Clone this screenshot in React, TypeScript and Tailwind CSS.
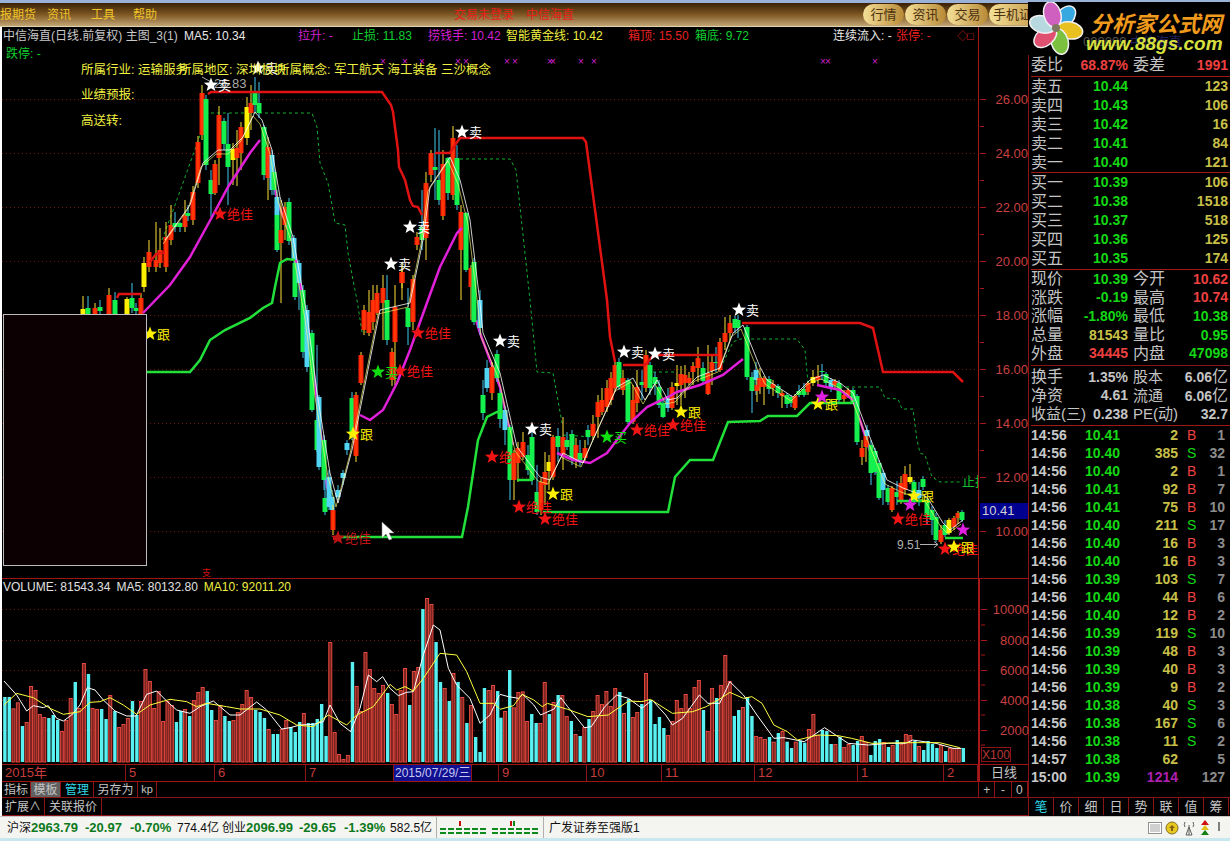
import React from 'react'

type C = [number, number, number, string, number?, number?]

// candles in page pixels: x, body top, body bottom, colour, wick top, wick bottom
const candles: C[] = [
  [83,309,320,'y',296],[88,308,320,'g',296],[95,308,320,'r'],[100,307,311,'g',300],[109,295,320,'r',288],[115,300,320,'g',292],[127,299,320,'y',297],[132,298,308,'g',283],[136,308,311,'g'],[141,298,320,'r',293],
  [144,263,287,'y',257],[149,252,267,'r',240],[156,260,267,'r',222],[160,250,263,'r',228],[166,237,267,'r',222],[171,225,240,'r',205],[175,223,227,'g',212],[180,223,227,'g',222],[185,215,227,'r',200],[188,213,216,'g',205],[193,192,220,'r',186],
  [198,142,183,'r',136],[202,93,135,'r',85],[206,99,165,'g',95,170],[211,180,194,'g',170,217],[215,164,193,'r',160,195],[219,115,158,'r',106,185],[224,121,144,'g',118,150],[228,144,167,'g',113,205],[233,149,160,'y',143,185],[237,148,158,'r',130,186],[241,127,153,'r',122,170],
  [247,107,138,'y',97,145],[251,103,113,'r',85,130],[255,92,105,'g',77,112],[259,103,113,'g',82,118],[264,127,175,'g',125,180],[268,147,178,'r',137,200],[272,155,190,'c',150,195],[274,172,190,'g',170,195],[277,197,215,'c',190,230],[277,215,250,'g',212,252],[281,230,243,'r',200,303],[285,207,225,'r',202,240],[289,202,241,'g',198,245],[294,238,260,'c',235,265],[295,263,297,'g',262,300],[299,263,283,'c',260,310],
  [303,290,352,'g',285,358],[307,310,367,'c',305,372],[312,333,410,'g',330,412],[317,420,450,'g',345,452],[319,397,467,'c',395,470],[324,440,480,'g',435,490],[325,498,512,'g',478,515],[329,477,507,'c',470,510],[332,497,510,'c',490,512],[333,510,530,'r',505,535],
  [338,490,497,'c',485,500],[343,473,478,'c',470,485],[347,443,450,'c',440,455],[352,398,437,'g',392,440],[356,395,456,'r',392,462],
  [361,355,383,'r',352,385],[364,310,330,'r',305,335],[369,312,333,'r',290,336],[373,300,322,'r',285,330],[377,293,313,'r',285,315],[383,288,303,'r',275,340],[387,300,340,'g',275,345],[392,352,380,'r',348,386],[395,307,342,'r',285,385],[402,272,283,'r',262,300],[402,272,283,'r'],[408,308,327,'g',288,345],[413,279,322,'r',275,330],[417,237,245,'r',232,250],[422,227,240,'g',190,250],[426,183,238,'r',172,260],
  [431,153,175,'r',150,182],[435,167,170,'g',128,200],[439,180,200,'g',130,205],[443,164,216,'r',150,220],[448,158,193,'g',157,200],[453,138,195,'r',126,200],[457,158,205,'g',145,210],[461,212,250,'r',205,300],[466,213,270,'g',212,272],[471,268,287,'r',265,320],[474,262,322,'g',258,325],[480,300,328,'c',290,335],
  [483,395,413,'g',380,420],[487,368,388,'c',360,392],[492,367,393,'r',362,400],[497,354,378,'g',350,382],[500,393,419,'g',390,428],[505,410,430,'c',406,445],[510,427,480,'g',425,500],[514,453,480,'r',450,500],[518,448,463,'r',442,482],[523,442,457,'r',432,460],[528,455,470,'g',445,475],[532,437,480,'g',432,485],[537,492,512,'g',465,515],[541,482,510,'r',478,515],[545,472,485,'r',452,505],[549,462,471,'y',455,490],[553,437,477,'r',435,480],
  [558,436,447,'g',428,462],[563,437,455,'r',417,470],[567,440,447,'g',432,450],[572,434,460,'g',430,465],[576,445,460,'r',438,468],[580,453,462,'g',440,466],[585,448,458,'r',440,462],[588,430,437,'g',425,445],[593,424,436,'r',415,440],[598,402,417,'r',395,438],[602,400,412,'r',388,415],[607,388,407,'r',380,412],[611,378,400,'r',372,405],[615,365,388,'r',360,392],[619,362,387,'g',358,390],[623,378,390,'r',370,395],[628,380,422,'g',378,424],[633,400,422,'r',385,424],[637,387,403,'r',370,412],[642,382,385,'g',370,400],[646,355,388,'r',350,392],[650,365,388,'g',362,395],
  [655,377,384,'g',372,395],[659,387,405,'g',380,408],[663,403,417,'g',398,418],[668,397,408,'c',388,412],[672,387,408,'r',382,410],[677,383,386,'y',365,405],[681,374,385,'r',366,405],[685,375,383,'r',365,398],[689,378,383,'r',372,385],[693,366,372,'r',362,385],[698,358,368,'r',347,382],[703,368,381,'g',362,384],[708,373,394,'r',345,395],[712,362,371,'r',355,385],[716,362,363,'g',347,372],[720,342,370,'r',338,372],[725,333,342,'r',317,350],[730,323,333,'r',315,340],[735,319,328,'g',316,333],[738,320,328,'g',315,338],
  [747,327,377,'g',325,380],[752,377,391,'g',372,413],[756,370,380,'c',362,395],[757,385,391,'r',378,402],[760,378,387,'r',368,394],[764,378,387,'r',376,405],[769,379,389,'g',376,394],[773,384,388,'r',380,396],[778,386,393,'g',384,398],[782,393,396,'r',390,408],[787,395,404,'g',393,408],[791,397,403,'g',395,407],[795,396,408,'r',394,410],[799,391,395,'g',385,397],[804,389,395,'g',383,397],[808,383,392,'r',381,395],[813,377,383,'y',370,386],[818,376,380,'r',365,384],[822,371,372,'g',364,380],[826,374,383,'g',372,386],[831,380,387,'c',378,392],[835,381,385,'r',379,388],[839,383,400,'g',380,402],[844,395,399,'r',390,402],[848,390,395,'r',388,398],[853,390,402,'g',388,404],
  [857,396,442,'g',394,445],[862,448,457,'r',440,465],[866,436,447,'r',430,462],[867,430,436,'c',425,440],[871,445,473,'g',440,485],[875,451,472,'g',448,475],[879,463,498,'g',460,500],[883,473,490,'c',470,505],[888,488,502,'g',485,505],[892,488,510,'r',486,512],[897,492,497,'g',481,505],[901,483,502,'r',476,504],[905,474,490,'r',466,495],[910,477,482,'y',464,484],[914,482,502,'g',480,504],[919,490,498,'c',482,506],[923,479,487,'g',476,490],[927,500,517,'g',498,525],[932,510,520,'g',506,535],[936,517,540,'g',513,542],[941,530,542,'r',525,544],[945,525,535,'g',520,537],[949,520,533,'y',518,535],[954,518,527,'r',516,530],[958,513,518,'r',511,524],[962,512,520,'g',510,522],
]

const fill: Record<string, string> = { r: '#ff2408', g: '#14f04e', c: '#52d4f4', y: '#fff000' }

// volume bars read from the picture, top in 3x zoom px, minus means cyan
const vol1 = [-366,-366,400,382,-453,441,333,345,417,426,-429,-420,-435,468,435,369,-321,399,264,-297,399,402,-402,-432,360,-408,456,447,429,-378,-420,378,282,318,399,348,438,378,390,-441,-408,402,-423,375,351,336,-348,-405,435,390,-423,-438,435,411,387,345,366,-405,-411,-429,462,-477,-477,462,435,-456,-471,-441,414,-444,-444,-432,-387,-483,201,471,537,552,540,-261,333,408,231,282,339,354,330,-354,387,417,345,279,-390,288,276,-102,69,87,-201,-321,339,-378,294,-321,366,-444,390,-486,-531,-339,345,330,-348]
const vol2 = [-428,408,-285,397,351,349,438,-417,-444,444,321,-417,381,-360,360,423,-438,477,-483,456,-432,408,360,387,348,393,339,-351,414,-372,426,411,-387,294,-375,-447,-426,-459,480,438,375,399,357,399,336,315,-405,468,339,-369,330,240,318,-423,-405,396,-366,-423,483,486,492,-486,500,-474,468,-500,-519,500,-497,-503,462,417,480,-465,-468,-507,507,-486,516,507,-510,-498,483,501,-540,-498,-492,501,-516,510,-495,507,477,480,-498,513,-525,-498,-507,-519,510,-528,519,519,519,-519]

type P = [number, number]
const z9 = (a: number[]) => { const r: string[] = []; for (let i = 0; i < a.length; i += 2) r.push(`${a[i] / 3},${575 + a[i + 1] / 3}`); return r.join(' ') }
const z10 = (a: number[]) => { const r: string[] = []; for (let i = 0; i < a.length; i += 2) r.push(`${500 + a[i] / 2.958},${575 + a[i + 1] / 3}`); return r.join(' ') }

const whiteV1 = [12,318,50,360,80,408,100,392,130,398,145,392,170,430,190,438,215,420,240,390,262,338,285,345,310,375,345,408,380,423,408,423,440,358,470,348,500,378,530,405,570,415,600,395,640,378,690,420,720,420,770,381,800,405,845,462,870,458,900,450,940,448,970,440,990,390,1020,445,1052,470,1080,400,1105,300,1130,320,1148,305,1170,340,1195,362,1220,352,1240,350,1270,240,1300,150,1320,165,1345,280,1370,330,1410,370,1440,445,1470,420,1498,360]
const yellowV1 = [12,390,50,355,100,368,150,400,190,418,240,410,270,382,300,380,330,368,370,390,410,418,450,390,510,373,560,380,590,395,620,385,680,395,720,402,780,402,840,420,890,450,940,455,985,420,1040,450,1070,420,1120,395,1170,328,1190,345,1215,335,1240,348,1270,310,1320,235,1370,240,1400,290,1440,385,1480,385,1498,400]
const whiteV2 = [0,358,25,365,55,370,67,358,100,390,120,420,160,402,180,368,200,395,250,458,270,455,310,395,345,360,380,370,420,400,450,375,490,420,510,450,540,430,590,360,615,385,650,385,680,320,720,360,760,420,810,490,840,488,900,500,960,458,1030,505,1090,510,1150,505,1200,505,1220,495,1290,505,1340,520,1365,520]
const yellowV2 = [0,403,40,392,65,358,100,375,125,395,140,385,200,403,260,425,320,420,380,378,420,380,445,373,510,415,570,410,610,395,650,372,680,352,720,370,745,365,775,385,810,450,850,470,880,495,940,480,1000,482,1040,490,1100,505,1200,503,1300,503,1360,518]

const line = (a: P[]) => a.map(p => p.join(',')).join(' ')

const redLines: P[][] = [
  [[117,298],[119,294],[141,294]],
  [[150,262],[156,254],[165,252]],
  [[208,94],[211,92],[382,92],[391,105],[393,112],[398,150],[399,167],[405,180],[410,200],[413,206],[418,207],[422,215]],
  [[435,153],[450,153],[455,145],[460,138],[583,138],[586,142],[607,300],[610,337],[615,362]],
  [[623,365],[645,365],[652,357],[657,355],[718,355]],
  [[742,323],[860,323],[873,328],[883,372],[953,372],[963,382]],
]
// the falling legs run behind the candles, the rising ones lie on top
const magentaUnder: P[][] = [
  [[268,157],[278,203],[293,243],[310,340],[327,487],[333,505]],
  [[476,320],[480,333],[500,387],[513,445]],
  [[853,400],[860,420],[877,473]],
]
const magentaLines: P[][] = [
  [[143,313],[170,285],[190,257],[212,217],[228,187],[250,153],[260,140]],
  [[360,415],[370,420],[383,410],[397,383],[410,350],[428,300],[440,267],[457,233],[462,228]],
  [[557,453],[573,460],[590,463],[607,453],[630,423],[647,407],[668,397],[677,392],[700,385],[723,375],[743,359]],
  [[817,385],[840,390],[853,400]],
]
const greenLines: P[][] = [
  [[147,372],[190,372],[200,360],[210,340],[225,330],[250,318],[263,308],[272,303],[275,287],[280,263],[287,259],[295,260]],
  [[337,537],[462,537],[468,507],[478,440],[487,417],[497,412],[503,412]],
  [[517,480],[533,480]],
  [[543,512],[668,512],[675,477],[690,460],[713,460],[728,422],[760,421],[768,416],[797,416],[810,403],[853,403]],
  [[897,501],[930,501]],
  [[945,538],[963,538]],
]
const dashed: P[][] = [
  [[162,240],[175,205],[208,113],[312,113],[317,127],[320,163],[328,183],[332,205],[335,223],[345,225],[348,253],[353,280],[357,300],[362,332],[367,332]],
  [[460,159],[510,159],[516,170],[530,300],[537,372],[553,373],[562,423]],
  [[563,435],[593,437]],
  [[653,372],[677,372]],
  [[723,363],[733,342],[740,339],[797,339],[805,350],[808,383],[812,390]],
  [[840,387],[880,387],[885,398],[898,399],[902,409],[913,409],[917,440],[920,453],[925,455],[932,477],[940,482],[962,482]],
]
const whiteLine: P[] = [[165,240],[190,205],[203,163],[218,150],[230,150],[243,137],[255,112],[262,120],[272,150],[280,197],[293,237],[307,315],[317,393],[330,473],[338,503],[352,450],[360,410],[380,310],[410,303],[423,240],[430,187],[450,157],[460,180],[470,220],[480,303],[483,333],[500,373],[517,447],[540,477],[550,480],[563,453],[583,463],[593,440],[617,387],[633,378],[645,400],[657,380],[668,400],[677,398],[697,377],[720,368],[733,333],[743,325],[760,367],[767,380],[793,397],[810,380],[823,375],[840,383],[853,393],[867,430],[887,480],[903,488],[927,497],[943,523],[950,530],[963,520]]
const yellowLine: P[] = whiteLine.map(([x, y]) => [x - 2, y + 4] as P)

type M = [number, number, string, string?]
const marks: M[] = [
  [211,85,'w','卖'],[258,68,'w','卖'],[410,227,'w','卖'],[391,264,'w','卖'],[462,132,'w','卖'],[500,341,'w','卖'],[532,429,'w','卖'],[624,352,'w','卖'],[655,354,'w','卖'],[739,310,'w','卖'],
  [220,214,'r','绝佳'],[418,333,'r','绝佳'],[400,371,'r','绝佳'],[492,457,'r','绝'],[519,507,'r','绝佳'],[545,519,'r','绝佳'],[338,538,'d','绝佳'],[637,430,'r','绝佳'],[673,425,'r','绝佳'],[898,519,'r','绝佳'],[945,549,'r','绝佳'],
  [378,372,'g','买'],[607,437,'g','买'],
  [150,334,'y','跟'],[353,434,'y','跟'],[553,494,'y','跟'],[681,412,'y','跟'],[818,404,'y','跟'],[914,496,'y','跟'],[954,547,'y','跟'],
  [822,397,'m'],[910,505,'m'],[963,530,'m'],
]
const markColor: Record<string, string> = { w: '#ffffff', r: '#f01414', d: '#c01414', g: '#10e010', y: '#fff000', m: '#e020e0' }

function star(cx: number, cy: number, r: number) {
  const p: string[] = []
  for (let i = 0; i < 10; i++) {
    const a = -Math.PI / 2 + (i * Math.PI) / 5
    const d = i % 2 ? r * 0.42 : r
    p.push(`${(cx + d * Math.cos(a)).toFixed(1)},${(cy + d * Math.sin(a)).toFixed(1)}`)
  }
  return p.join(' ')
}

const priceLevels = [26, 24, 22, 20, 18, 16, 14, 12, 10]
const py = (p: number) => 99 + (26 - p) * 27
const crosses = [383,405,422,458,466,507,515,550,553,581,594,823,828,875]

function MainChart() {
  return (
    <svg width="976" height="551" className="block">
      <g transform="translate(-2 -27)">
        {priceLevels.map(p => <line key={p} x1="2" x2="978" y1={py(p) + 0.5} y2={py(p) + 0.5} stroke="#701414" strokeDasharray="1 3" />)}
        {crosses.map(x => <text key={x} x={x} y="65" fill="#d020d0" fontSize="10" textAnchor="middle">×</text>)}
        {dashed.map((a, i) => <polyline key={i} points={line(a)} fill="none" stroke="#12b030" strokeDasharray="3 3" />)}
        {magentaUnder.map((a, i) => <polyline key={i} points={line(a)} fill="none" stroke="#e020d8" strokeWidth="2.5" />)}
        {candles.map(([x, t, b, c, wt, wb], i) => (
          <g key={i}>
            <line x1={x} x2={x} y1={wt ?? t - 5} y2={wb ?? b + 5} stroke={c === 'r' || c === 'y' ? '#ffe23a' : '#44c8f0'} />
            <rect x={x - 2.5} y={t} width="5" height={b - t} fill={fill[c]} />
            {c === 'r' && <rect x={x - 0.5} y={t} width="1" height={b - t} fill="#ff4a00" />}
          </g>
        ))}
        {magentaLines.map((a, i) => <polyline key={i} points={line(a)} fill="none" stroke="#e020d8" strokeWidth="2.5" />)}
        <polyline points={line(yellowLine)} fill="none" stroke="#ffff70" strokeWidth="0.8" strokeOpacity="0.8" />
        <polyline points={line(whiteLine)} fill="none" stroke="#ffffff" strokeWidth="0.8" />
        {redLines.map((a, i) => <polyline key={i} points={line(a)} fill="none" stroke="#e01212" strokeWidth="2.5" />)}
        {greenLines.map((a, i) => <polyline key={i} points={line(a)} fill="none" stroke="#22e03a" strokeWidth="2.5" />)}
        <rect x="333" y="536" width="4" height="4" fill="#e01010" />
        <path d="M202 77l11 6" stroke="#a8a8a8" />
        <text x="214" y="88" fill="#a8a8a8" fontSize="13">26.83</text>
        {marks.map(([x, y, c, t], i) => (
          <g key={i}>
            <polygon points={star(x, y, 7.5)} fill={markColor[c]} />
            {t && <text x={x + 7} y={y + 5} fill={markColor[c]} fontSize="13">{t}</text>}
          </g>
        ))}
        <text x="897" y="549" fill="#b0b0b0" fontSize="12">9.51</text>
        <path d="M920 544.5H938M934 541.5l4 3-4 3" fill="none" stroke="#b0b0b0" />
        <text x="962" y="486" fill="#10c030" fontSize="13">止损</text>
        <path d="M382 522v16l4-4 3 6 3-1-3-6h5z" fill="#ffffff" stroke="#888888" strokeWidth="0.5" />
        <text x="202" y="576" fill="#d01010" fontSize="9">支</text>
      </g>
    </svg>
  )
}

function PriceAxis() {
  const minor = [25, 23, 21, 19, 17, 15, 13, 11]
  return (
    <svg width="50" height="551" className="block">
      <g transform="translate(-978 -27)">
        {priceLevels.map(p => (
          <g key={p}>
            <line x1="979" x2="985" y1={py(p) + 0.5} y2={py(p) + 0.5} stroke="#a81818" />
            <text x="1027" y={py(p) + 5} textAnchor="end" fill="#c84040" fontSize="13">{p.toFixed(2)}</text>
          </g>
        ))}
        {minor.map(p => <line key={p} x1="979" x2="983" y1={py(p) + 0.5} y2={py(p) + 0.5} stroke="#a81818" />)}
        <rect x="979" y="503" width="49" height="16" fill="#000090" />
        <text x="981" y="515" fill="#d0d0d0" fontSize="13">10.41</text>
      </g>
    </svg>
  )
}

function VolumeChart() {
  const bar = (x: number, top: number, key: string) => {
    const t = Math.abs(top)
    const y = 575 + t / 3
    if (top < 0) return <rect key={key} x={x - 1.5} y={y} width="3.4" height={762 - y} fill="#58f0f0" />
    return <rect key={key} x={x - 1.5} y={y + 0.5} width="3" height={761.5 - y} fill="#7c2420" stroke="#e4483e" />
  }
  return (
    <svg width="976" height="185" className="block">
      <g transform="translate(-2 -579)">
        {[609, 640, 670, 700, 730].map(y => <line key={y} x1="2" x2="978" y1={y + 0.5} y2={y + 0.5} stroke="#701414" strokeDasharray="1 3" />)}
        {vol1.map((v, i) => bar(4.67 + 4.4 * i, v, `a${i}`))}
        {vol2.map((v, i) => bar(500.7 + 4.404 * i, v, `b${i}`))}
        <polyline points={z9(whiteV1)} fill="none" stroke="#ffffff" />
        <polyline points={z10(whiteV2)} fill="none" stroke="#ffffff" />
        <polyline points={z9(yellowV1)} fill="none" stroke="#ffff40" />
        <polyline points={z10(yellowV2)} fill="none" stroke="#ffff40" />
      </g>
    </svg>
  )
}

function VolumeAxis() {
  const labels: [string, number][] = [['10000', 609], ['8000', 640], ['6000', 670], ['4000', 700], ['2000', 730]]
  return (
    <svg width="50" height="185" className="block">
      <g transform="translate(-978 -579)">
        {labels.map(([t, y]) => (
          <g key={t}>
            <line x1="979" x2="985" y1={y + 0.5} y2={y + 0.5} stroke="#a81818" />
            <text x="1027" y={y + 5} textAnchor="end" fill="#c84040" fontSize="13">{t}</text>
          </g>
        ))}
        {[625, 655, 685, 715, 745].map(y => <line key={y} x1="979" x2="983" y1={y} y2={y} stroke="#a81818" />)}
      </g>
    </svg>
  )
}

const book: [string, string, string][] = [
  ['卖五', '10.44', '123'], ['卖四', '10.43', '106'], ['卖三', '10.42', '16'], ['卖二', '10.41', '84'], ['卖一', '10.40', '121'],
]
const book2: [string, string, string][] = [
  ['买一', '10.39', '106'], ['买二', '10.38', '1518'], ['买三', '10.37', '518'], ['买四', '10.36', '125'], ['买五', '10.35', '174'],
]
const stats: [string, string, string, string, string, string][] = [
  ['现价', '10.39', 'text-[#14d814]', '今开', '10.62', 'text-[#ee4040]'],
  ['涨跌', '-0.19', 'text-[#14d814]', '最高', '10.74', 'text-[#ee4040]'],
  ['涨幅', '-1.80%', 'text-[#14d814]', '最低', '10.38', 'text-[#14d814]'],
  ['总量', '81543', 'text-[#c8c048]', '量比', '0.95', 'text-[#14d814]'],
  ['外盘', '34445', 'text-[#ee4040]', '内盘', '47098', 'text-[#14d814]'],
]
const stats2: [string, string, string, string][] = [
  ['换手', '1.35%', '股本', '6.06亿'], ['净资', '4.61', '流通', '6.06亿'], ['收益(三)', '0.238', 'PE(动)', '32.7'],
]
const trades: [string, string, string, string, string][] = [
  ['14:56','10.41','2','B','1'],['14:56','10.40','385','S','32'],['14:56','10.40','2','B','1'],['14:56','10.41','92','B','7'],['14:56','10.41','75','B','10'],
  ['14:56','10.40','211','S','17'],['14:56','10.40','16','B','3'],['14:56','10.40','16','B','3'],['14:56','10.39','103','S','7'],['14:56','10.40','44','B','6'],
  ['14:56','10.40','12','B','2'],['14:56','10.39','119','S','10'],['14:56','10.39','48','B','3'],['14:56','10.39','40','B','3'],['14:56','10.39','9','B','2'],
  ['14:56','10.38','40','S','3'],['14:56','10.38','167','S','6'],['14:56','10.38','11','S','2'],['14:57','10.38','62','','5'],['15:00','10.39','1214','','127'],
]

function BookRows({ rows, h }: { rows: [string, string, string][]; h: string }) {
  return (
    <div className={`flex flex-col border-b border-[#a01818] box-content ${h}`}>
      {rows.map(r => (
        <div key={r[0]} className="flex items-center h-[19px] shrink-0">
          <span className="w-[36px]">{r[0]}</span>
          <span className="w-[61px] text-right text-[14px] font-bold text-[#14d814]">{r[1]}</span>
          <span className="w-[100px] text-right text-[14px] font-bold text-[#c8c048]">{r[2]}</span>
        </div>
      ))}
    </div>
  )
}

function RightPanel() {
  return (
    <div className="w-[202px] flex flex-col bg-black border-l border-[#8c1414] pl-[2px] text-[16px] text-[#c4c4c4]">
      <div className="h-[26px] shrink-0" />
      <div className="h-[22px] mt-[1px] flex items-center border-b border-[#a01818] box-content shrink-0">
        <span className="w-[36px]">委比</span>
        <span className="w-[61px] text-right text-[14px] font-bold text-[#ee4040]">68.87%</span>
        <span className="w-[36px] ml-[4px] pl-[1px]">委差</span>
        <span className="w-[60px] text-right text-[14px] font-bold text-[#ee4040]">1991</span>
      </div>
      <BookRows rows={book} h="h-[95px]" />
      <BookRows rows={book2} h="h-[96px]" />
      <div className="flex flex-col h-[96px] border-b border-[#8c1414] shrink-0">
        {stats.map(s => (
          <div key={s[0]} className="flex items-center h-[18.6px]">
            <span className="w-[36px]">{s[0]}</span>
            <span className={`w-[61px] text-right text-[14px] font-bold ${s[2]}`}>{s[1]}</span>
            <span className="w-[36px] ml-[4px] pl-[1px]">{s[3]}</span>
            <span className={`w-[60px] text-right text-[14px] font-bold ${s[5]}`}>{s[4]}</span>
          </div>
        ))}
      </div>
      <div className="flex flex-col h-[60px] pt-[2px] border-b border-[#a01818] shrink-0">
        {stats2.map(s => (
          <div key={s[0]} className="flex items-center h-[18.6px]">
            <span className={s[0].length > 2 ? 'w-[60px] text-[15px] whitespace-nowrap' : 'w-[36px]'}>{s[0]}</span>
            <span className={`text-right text-[14px] font-bold text-[#c4c4c4] ${s[0].length > 2 ? 'w-[37px]' : 'w-[61px]'}`}>{s[1]}</span>
            <span className="w-[44px] ml-[4px] pl-[1px] text-[15px] whitespace-nowrap">{s[2]}</span>
            <span className="w-[52px] text-right text-[14px] font-bold text-[#c4c4c4] whitespace-nowrap">{s[3].replace('亿', '')}{s[3].includes('亿') && <span className="text-[16px] font-normal">亿</span>}</span>
          </div>
        ))}
      </div>
      <div className="flex flex-col h-[371px] text-[14px] font-bold shrink-0">
        {trades.map((t, i) => (
          <div key={i} className="flex items-center h-[18px] shrink-0">
            <span className="w-[36px] text-[#c8c8c8]">{t[0]}</span>
            <span className="w-[53px] text-right text-[#14d814]">{t[1]}</span>
            <span className={`w-[58px] text-right ${t[2] === '1214' ? 'text-[#b020b0]' : 'text-[#c8c048]'}`}>{t[2]}</span>
            <span className={`w-[18px] pl-[9px] font-normal ${t[3] === 'B' ? 'text-[#ee4040]' : 'text-[#14d814]'}`}>{t[3]}</span>
            <span className="w-[29px] text-right text-[#8c8c8c]">{t[4]}</span>
          </div>
        ))}
      </div>
      <div className="flex h-[18px] -ml-[2px] border-t border-[#8c1414] text-[13px] shrink-0">
        {['笔', '价', '细', '日', '势', '联', '值', '筹'].map((t, i) => (
          <div key={t} className={`w-[25px] flex items-center justify-center border-r border-[#8c1414] ${i === 0 ? 'text-[#30d8e8]' : ''}`}>{t}</div>
        ))}
      </div>
    </div>
  )
}

function Logo() {
  const petals = [
    { a: -50, c: '#38a8e0' }, { a: 10, c: '#e8c020' }, { a: 75, c: '#7cc040' }, { a: 140, c: '#e05070' }, { a: 195, c: '#b8d8e0' }, { a: -105, c: '#d060c0' },
  ]
  return (
    <div className="absolute right-0 top-[2px] w-[202px] h-[53px] bg-black overflow-hidden">
      <svg width="60" height="53" className="absolute left-0 top-0">
        <g transform="translate(28 26)">
          {petals.map(p => (
            <ellipse key={p.a} cx="14" cy="0" rx="13" ry="8.5" fill={p.c} stroke="#f0f0f0" strokeWidth="1.5" transform={`rotate(${p.a})`} />
          ))}
          <circle r="4" fill="#807860" />
        </g>
      </svg>
      <span className="absolute left-[55px] top-[30px] text-[13px] text-[#505050] whitespace-nowrap">000099 <span className="text-[#202060]">中信海直</span></span>
      <span className="absolute left-[62px] top-[10px] font-bold italic text-[22px] leading-[26px] text-[#f09a1c] whitespace-nowrap">分析家公式网</span>
      <span className="absolute left-[58px] top-[30px] font-bold italic text-[19px] leading-[24px] text-[#d8e040] whitespace-nowrap">www.88gs.com</span>
    </div>
  )
}

const cellB = 'border-r border-[#8c1414] flex items-center'
const timeCells: [string, number, string][] = [
  ['2015年', 124, ''], ['5', 89, ''], ['6', 91, ''], ['7', 88, ''], ['2015/07/29/三', 78, 'sel'], ['', 27, ''], ['9', 88, ''], ['10', 75, ''], ['11', 93, ''], ['12', 103, ''], ['1', 86, ''], ['2', 34, ''],
]

export default function App() {
  return (
    <div className="relative w-[1230px] h-[841px] overflow-hidden bg-black flex flex-col font-['Liberation_Sans','Noto_Sans_CJK_SC',sans-serif]">
      {/* title strip */}
      <div className="h-[3px] bg-[#9ab2d8] shrink-0" />
      <div className="h-[24px] shrink-0 flex items-center bg-gradient-to-b from-[#3a2208] via-[#7e5722] to-[#c2a574] border-b border-[#e0d4b0] text-[12px] text-[#f0c428] overflow-hidden">
        <span className="w-[47px] whitespace-nowrap">报期货</span>
        <span className="w-[44px]">资讯</span>
        <span className="w-[42px]">工具</span>
        <span className="w-[40px]">帮助</span>
        <span className="ml-[281px] w-[72px] text-[#e82018] whitespace-nowrap">交易未登录</span>
        <span className="w-[48px] text-[#e82018] whitespace-nowrap">中信海直</span>
        <div className="ml-[289px] flex gap-[1px] text-[13px]">
          {['行情', '资讯', '交易'].map(t => (
            <div key={t} className="w-[41px] h-[21px] rounded-full bg-gradient-to-r from-[#f4e098] to-[#b88a34] text-[#4c320e] flex items-center justify-center">{t}</div>
          ))}
          <div className="w-[60px] h-[21px] rounded-full bg-gradient-to-r from-[#f4e098] to-[#b88a34] text-[#4c320e] flex items-center pl-[4px] whitespace-nowrap">手机证券</div>
        </div>
      </div>
      <div className="flex flex-1 min-h-0">
        <div className="w-[1028px] flex flex-col border-l-2 border-white">
          {/* main pane */}
          <div className="flex h-[551px] shrink-0">
            <div className="relative w-[976px]">
              <MainChart />
              <div className="absolute inset-0 text-[12px]">
                <div className="flex h-[18px] items-center pl-[1px] whitespace-nowrap">
                  <span className="w-[181px] text-[#c8c8c8]">中信海直(日线.前复权) 主图_3(1)</span>
                  <span className="w-[114px] text-[#e8e8e8]">MA5: 10.34</span>
                  <span className="w-[54px] text-[#d020d0]">拉升: -</span>
                  <span className="w-[76px] text-[#10d030]">止损: 11.83</span>
                  <span className="w-[78px] text-[#d020d0]">捞钱手: 10.42</span>
                  <span className="w-[122px] text-[#f0f040]">智能黄金线: 10.42</span>
                  <span className="w-[67px] text-[#e82020]">箱顶: 15.50</span>
                  <span className="w-[138px] text-[#10d030]">箱底: 9.72</span>
                  <span className="w-[63px] text-[#e8e8e8]">连续流入: -</span>
                  <span className="w-[61px] text-[#e82020]">张停: -</span>
                  <span className="w-[10px] text-[#d02020] text-[11px]">◇</span>
                  <span className="text-[#d02020] text-[11px]">□</span>
                </div>
                <div className="h-[17px] flex items-center pl-[4px] text-[#10d030]">跌停: -</div>
                <div className="flex h-[18px] mt-[-1px] items-center pl-[79px] whitespace-nowrap text-[#f0f040] text-[12.5px]">
                  <span className="w-[98px]">所属行业: 运输服务</span>
                  <span className="w-[98px]">所属地区: 深圳板块</span>
                  <span>所属概念: 军工航天 海工装备 三沙概念</span>
                </div>
                <div className="h-[18px] mt-[7px] flex items-center pl-[79px] text-[#f0f040] text-[12.5px]">业绩预报:</div>
                <div className="h-[18px] mt-[8px] flex items-center pl-[79px] text-[#f0f040] text-[12.5px]">高送转:</div>
              </div>
              <div className="absolute left-[1px] top-[287px] w-[144px] h-[252px] bg-[#0c0002] border border-[#bcbcbc]" />
            </div>
            <div className="w-[50px] border-l border-[#a81818]"><PriceAxis /></div>
          </div>
          <div className="h-[1px] bg-[#a01414] shrink-0" />
          {/* volume pane */}
          <div className="flex h-[185px] shrink-0">
            <div className="relative w-[976px]">
              <VolumeChart />
              <div className="absolute left-[1px] top-[0px] h-[16px] flex items-center gap-[6px] text-[12px] whitespace-nowrap">
                <span className="text-[#e0e0e0]">VOLUME: 81543.34</span>
                <span className="text-[#e0e0e0]">MA5: 80132.80</span>
                <span className="text-[#f0f040]">MA10: 92011.20</span>
              </div>
            </div>
            <div className="relative w-[50px] border-l-2 border-[#a81818]">
              <VolumeAxis />
              <div className="absolute left-[1px] bottom-[2px] w-[30px] h-[15px] border border-[#8c1414] text-[12px] text-[#b83838] flex items-center justify-center">X100</div>
            </div>
          </div>
          {/* time axis */}
          <div className="flex h-[16px] shrink-0 border-y border-[#a01414] box-content text-[13px] text-[#c83c3c]">
            <div className="flex w-[976px]">
              {timeCells.map(([t, w, k], i) => (
                <div key={i} style={{ width: w }} className={`${cellB} pl-[3px] whitespace-nowrap ${k ? 'bg-[#101090] text-[#c8c8f0] text-[12px] !pl-[1px]' : ''}`}>{t}</div>
              ))}
            </div>
            <div className="w-[50px] border-l-2 border-[#a81818] flex items-center justify-center text-[#c4c4c4]">日线</div>
          </div>
          <div className="flex h-[15px] shrink-0 text-[12px] text-[#c4c4c4] border-b border-[#8c1414] box-content">
            <div className="flex flex-1">
              <div className={`${cellB} w-[29px] justify-center`}>指标</div>
              <div className={`${cellB} w-[30px] justify-center bg-[#606060]`}>模板</div>
              <div className={`${cellB} w-[33px] justify-center text-[#30d8e8]`}>管理</div>
              <div className={`${cellB} w-[44px] justify-center`}>另存为</div>
              <div className={`${cellB} w-[19px] justify-center text-[11px]`}>kp</div>
            </div>
            <div className="flex w-[50px] border-l border-[#8c1414]">
              {['+', '-', '0'].map(t => <div key={t} className={`${cellB} flex-1 justify-center`}>{t}</div>)}
            </div>
          </div>
          <div className="flex h-[18px] shrink-0 text-[12px] text-[#c4c4c4] border-b border-[#8c1414]">
            <div className={`${cellB} w-[43px] justify-center`}>扩展∧</div>
            <div className={`${cellB} w-[57px] justify-center`}>关联报价</div>
          </div>
        </div>
        <RightPanel />
      </div>
      {/* status bar */}
      <div className="h-[22px] shrink-0 bg-[#f4f4f0] border-t border-[#c8c8c8] flex items-center text-[13px] text-[#101010] whitespace-nowrap">
        <span className="ml-[7px] text-[12px]">沪深</span>
        <b className="text-[#0c7a1c] w-[54px]">2963.79</b>
        <b className="text-[#0c7a1c] w-[45px]">-20.97</b>
        <b className="text-[#0c7a1c] w-[47px]">-0.70%</b>
        <span className="w-[45px] text-[12px]">774.4亿</span>
        <span className="text-[12px]">创业</span>
        <b className="text-[#0c7a1c] w-[53px]">2096.99</b>
        <b className="text-[#0c7a1c] w-[45px]">-29.65</b>
        <b className="text-[#0c7a1c] w-[46px]">-1.39%</b>
        <span className="w-[46px] text-[12px]">582.5亿</span>
        <div className="h-full w-[108px] border-x border-[#b0b0b0] flex items-center justify-center">
          <svg width="100" height="16">
            {[0, 1].map(g => [0, 1, 2, 3, 4, 5].map(i => (
              <g key={`${g}${i}`} fill="#0c8a1c">
                <rect x={g * 52 + i * 8} y="8" width="6" height="2" />
                <rect x={g * 52 + i * 8} y="12" width="6" height="2" />
              </g>
            )))}
            <rect x="19" y="1" width="2" height="5" fill="#c01010" />
            <rect x="70" y="1" width="2" height="5" fill="#c01010" />
            <rect x="73" y="1" width="2" height="5" fill="#0c8a1c" />
          </svg>
        </div>
        <span className="ml-[5px] text-[12px]">广发证券至强版1</span>
        <div className="ml-auto mr-[8px] flex items-center gap-[4px]">
          <svg width="74" height="18">
            <rect x="0.5" y="3.5" width="13" height="11" fill="#fff" stroke="#909090" />
            <path d="M2 6h10M2 8h10M2 10h10M2 12h10" stroke="#a0a0a0" />
            <circle cx="24" cy="9" r="6" fill="#e8c820" stroke="#807020" />
            <path d="M24 6l3 3h-2v3h-2V9h-2z" fill="#806010" />
            <path d="M41 6v10M38 16h6l-3-8zM37 3a5 5 0 0 0 0 5M45 3a5 5 0 0 1 0 5" fill="none" stroke="#606060" />
            <path d="M57 1l4 5h-8z" fill="#d01010" />
            <path d="M57 6l4 5h-8z" fill="#e0c010" />
            <path d="M57 11l4 5h-8z" fill="#108010" />
            <path d="M71 3v9" stroke="#808080" strokeWidth="2" />
          </svg>
        </div>
      </div>
      <div className="h-[3px] shrink-0 bg-[#c8e8f0]" />
      <Logo />
    </div>
  )
}
